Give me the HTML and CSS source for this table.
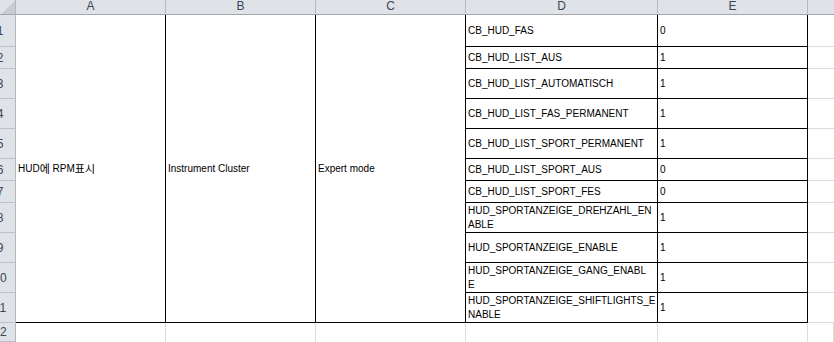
FILE: index.html
```html
<!DOCTYPE html>
<html lang="ko">
<head>
    <meta charset="UTF-8">
    <meta name="viewport" content="width=device-width, initial-scale=1.0">
    <title>HUD RPM</title>
    <link rel="stylesheet" href="styles.css">
</head>
<body>
    <div class="sheet">
        <!-- column headers -->
        <div class="corner"></div>
        <div class="colhead">A</div>
        <div class="colhead">B</div>
        <div class="colhead">C</div>
        <div class="colhead">D</div>
        <div class="colhead">E</div>
        <div class="colhead last"></div>

        <!-- row headers -->
        <div class="rowhead" style="grid-row: 2;"><span>1</span></div>
        <div class="rowhead" style="grid-row: 3;"><span>2</span></div>
        <div class="rowhead" style="grid-row: 4;"><span>3</span></div>
        <div class="rowhead" style="grid-row: 5;"><span>4</span></div>
        <div class="rowhead" style="grid-row: 6;"><span>5</span></div>
        <div class="rowhead" style="grid-row: 7;"><span>6</span></div>
        <div class="rowhead" style="grid-row: 8;"><span>7</span></div>
        <div class="rowhead" style="grid-row: 9;"><span>8</span></div>
        <div class="rowhead" style="grid-row: 10;"><span>9</span></div>
        <div class="rowhead" style="grid-row: 11;"><span>10</span></div>
        <div class="rowhead" style="grid-row: 12;"><span>11</span></div>
        <div class="rowhead" style="grid-row: 13;"><span>12</span></div>

        <!-- merged cells A1:C11 -->
        <div class="cell merged col-a">HUD<span class="ko">에</span>&nbsp;RPM<span class="ko">표시</span></div>
        <div class="cell merged col-b">Instrument Cluster</div>
        <div class="cell merged col-c">Expert mode</div>

        <!-- D / E / F per row -->
        <div class="cell key" style="grid-row: 2;">CB_HUD_FAS</div>
        <div class="cell val" style="grid-row: 2;">0</div>
        <div class="cell blank" style="grid-row: 2;"></div>

        <div class="cell key" style="grid-row: 3;">CB_HUD_LIST_AUS</div>
        <div class="cell val" style="grid-row: 3;">1</div>
        <div class="cell blank" style="grid-row: 3;"></div>

        <div class="cell key" style="grid-row: 4;">CB_HUD_LIST_AUTOMATISCH</div>
        <div class="cell val" style="grid-row: 4;">1</div>
        <div class="cell blank" style="grid-row: 4;"></div>

        <div class="cell key" style="grid-row: 5;">CB_HUD_LIST_FAS_PERMANENT</div>
        <div class="cell val" style="grid-row: 5;">1</div>
        <div class="cell blank" style="grid-row: 5;"></div>

        <div class="cell key" style="grid-row: 6;">CB_HUD_LIST_SPORT_PERMANENT</div>
        <div class="cell val" style="grid-row: 6;">1</div>
        <div class="cell blank" style="grid-row: 6;"></div>

        <div class="cell key" style="grid-row: 7;">CB_HUD_LIST_SPORT_AUS</div>
        <div class="cell val" style="grid-row: 7;">0</div>
        <div class="cell blank" style="grid-row: 7;"></div>

        <div class="cell key" style="grid-row: 8;">CB_HUD_LIST_SPORT_FES</div>
        <div class="cell val" style="grid-row: 8;">0</div>
        <div class="cell blank" style="grid-row: 8;"></div>

        <div class="cell key" style="grid-row: 9;">HUD_SPORTANZEIGE_DREHZAHL_EN<br>ABLE</div>
        <div class="cell val" style="grid-row: 9;">1</div>
        <div class="cell blank" style="grid-row: 9;"></div>

        <div class="cell key" style="grid-row: 10;">HUD_SPORTANZEIGE_ENABLE</div>
        <div class="cell val" style="grid-row: 10;">1</div>
        <div class="cell blank" style="grid-row: 10;"></div>

        <div class="cell key" style="grid-row: 11;">HUD_SPORTANZEIGE_GANG_ENABL<br>E</div>
        <div class="cell val" style="grid-row: 11;">1</div>
        <div class="cell blank" style="grid-row: 11;"></div>

        <div class="cell key" style="grid-row: 12;">HUD_SPORTANZEIGE_SHIFTLIGHTS_E<br>NABLE</div>
        <div class="cell val" style="grid-row: 12;">1</div>
        <div class="cell blank" style="grid-row: 12;"></div>

        <!-- row 12, empty -->
        <div class="cell empty" style="grid-row: 13; grid-column: 2;"></div>
        <div class="cell empty" style="grid-row: 13; grid-column: 3;"></div>
        <div class="cell empty" style="grid-row: 13; grid-column: 4;"></div>
        <div class="cell empty" style="grid-row: 13; grid-column: 5;"></div>
        <div class="cell empty" style="grid-row: 13; grid-column: 6;"></div>
        <div class="cell empty" style="grid-row: 13; grid-column: 7;"></div>
    </div>
</body>
</html>
```

FILE: styles.css
```css
* {
    box-sizing: border-box;
}

body {
    margin: 0;
    background: #ffffff;
    overflow: hidden;
    height: 342px;
}

.sheet {
    display: grid;
    grid-template-columns: 16px 150px 150px 150px 192px 150px 1fr;
    grid-template-rows: 15px 32px 22px 30px 30px 30px 22px 22px 30px 30px 30px 30px 1fr;
    height: 342px;
    font-family: "Liberation Sans", "Noto Sans CJK KR", sans-serif;
    font-size: 10px;
    color: #000;
}

/* header strip */
.corner {
    grid-row: 1;
    grid-column: 1;
    background: linear-gradient(135deg, #dfe2e6 55%, #c9cdd2 55%);
    border-right: 1px solid #b3b7bc;
    border-bottom: 1px solid #a4a8ad;
}

.colhead {
    grid-row: 1;
    background: #dfe2e6;
    border-right: 1px solid #b6bac0;
    border-bottom: 1px solid #a4a8ad;
    color: #3a4656;
    font-size: 12px;
    line-height: 13px;
    text-align: center;
}

.colhead.last {
    border-right: none;
}

.rowhead {
    grid-column: 1;
    background: #dfe2e6;
    border-right: 1px solid #b3b7bc;
    border-bottom: 1px solid #bcc0c5;
    color: #3a4656;
    font-size: 12px;
    overflow: hidden;
    display: flex;
    align-items: center;
}

.rowhead span {
    display: block;
    flex: none;
    width: 30px;
    margin-left: -15px;
    text-align: center;
}

/* data cells */
.cell {
    display: flex;
    align-items: center;
    padding-left: 2px;
    line-height: 14px;
    white-space: nowrap;
    overflow: hidden;
}

.cell .ko {
    font-size: 11px;
}

.merged {
    grid-row: 2 / 13;
    border-right: 1px solid #000;
    border-bottom: 1px solid #000;
}

.col-a { grid-column: 2; }
.col-b { grid-column: 3; }
.col-c { grid-column: 4; }

.key {
    grid-column: 5;
    border-right: 1px solid #000;
    border-bottom: 1px solid #000;
}

.val {
    grid-column: 6;
    border-right: 1px solid #000;
    border-bottom: 1px solid #000;
}

.blank {
    grid-column: 7;
    border-bottom: 1px solid #dadcdd;
}

.empty {
    border-right: 1px solid #dadcdd;
}
```
